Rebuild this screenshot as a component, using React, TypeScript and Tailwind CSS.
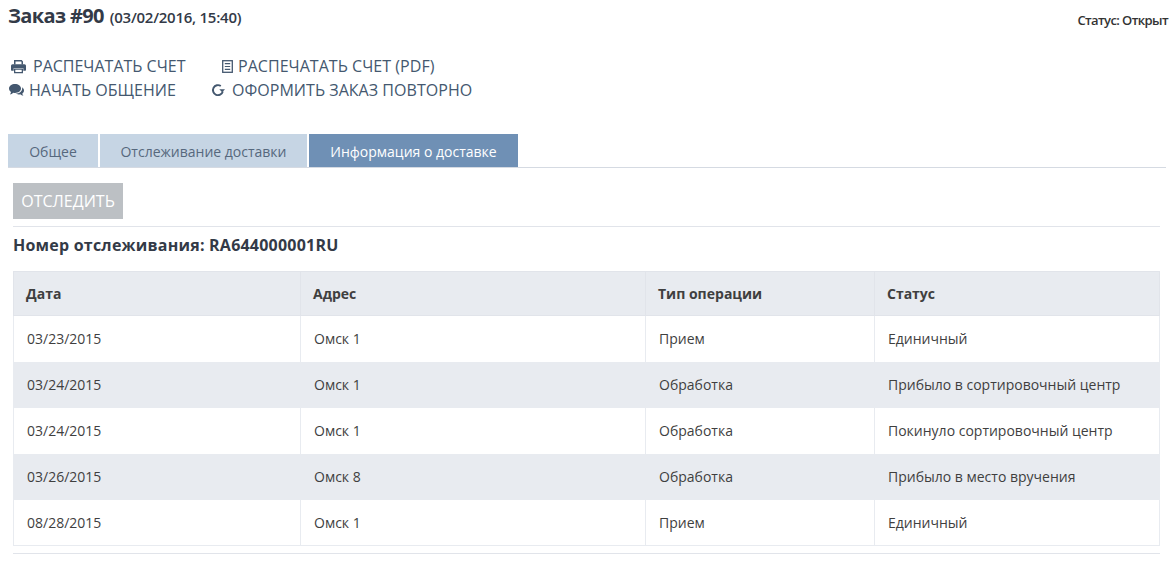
import React from "react";

const rows = [
  ["03/23/2015", "Омск 1", "Прием", "Единичный"],
  ["03/24/2015", "Омск 1", "Обработка", "Прибыло в сортировочный центр"],
  ["03/24/2015", "Омск 1", "Обработка", "Покинуло сортировочный центр"],
  ["03/26/2015", "Омск 8", "Обработка", "Прибыло в место вручения"],
  ["08/28/2015", "Омск 1", "Прием", "Единичный"],
];
const head = ["Дата", "Адрес", "Тип операции", "Статус"];

function PrintIcon() {
  return (
    <svg viewBox="0 0 15 14" className="ml-[2px] mr-[7px] w-[15px] h-[15px]" fill="#44586f">
      <path d="M3 5V.6h7.700L12 2v3h-1.500V2.300L10 1.900H4.500V5z" />
      <path d="M1.500 4.800h12A1.500 1.500 0 0 1 15 6.300V10.500a.7.7 0 0 1-.7.7H12.300V8.400H2.700v2.800H.7A.7.7 0 0 1 0 10.500V6.300A1.500 1.500 0 0 1 1.500 4.800z" />
      <path d="M3 9h9v4.800H3zM4.300 10.300v2.200h6.400v-2.200z" />
    </svg>
  );
}
function FileIcon() {
  return (
    <svg viewBox="0 0 11 13" className="mr-[5px] ml-px w-[11px] h-[13px]" fill="none" stroke="#44586f">
      <rect x="0.7" y="0.7" width="9.6" height="11.6" strokeWidth="1.300" />
      <path d="M2.800 3.600h5.400M2.800 6.500h5.400M2.800 9.400h5.400" strokeWidth="1.100" />
    </svg>
  );
}
function ChatIcon() {
  return (
    <svg viewBox="0 0 15 14" className="mr-[5px] w-[15px] h-[15px]" fill="#44586f">
      <path d="M6 .6c3.300 0 6 1.900 6 4.400s-2.700 4.400-6 4.400c-.6 0-1.100 0-1.700-.2C3.300 10.200 2.200 10.800.9 11c.6-.7 1-1.500 1.100-2.400C.8 7.700 0 6.400 0 5 0 2.500 2.700.6 6 .6z" />
      <path d="M13.100 3.700C14.300 4.500 15 5.600 15 6.900c0 1.200-.7 2.300-1.700 3 .1.8.5 1.600 1.100 2.300-1.200-.2-2.300-.7-3.200-1.500-.5.1-1 .2-1.600.2-1.200 0-2.200-.3-3.100-.8 3.900 0 7.400-2.300 6.600-6.400z" />
    </svg>
  );
}
function RepeatIcon() {
  return (
    <svg viewBox="0 0 14 14" className="mr-[7px] w-[14px] h-[14px]" fill="none" stroke="#44586f">
      <path d="M9.800 3A5 5 0 1 0 11.800 8.500" strokeWidth="1.900" />
      <path d="M8.300 6.300h5.700L11.200 9.300z" fill="#44586f" stroke="none" />
    </svg>
  );
}

export default function App() {
  return (
    <div className="w-[1174px] h-[562px] overflow-hidden bg-white font-['Open_Sans',sans-serif] text-[14px] text-[#333]">
      <div className="flex justify-between pl-2 pr-[6px] h-[54px]">
        <div className="flex items-baseline gap-[6px] h-[32px]">
          <span className="text-[20px] leading-[32px] font-bold tracking-[-0.65px] text-[#333a47]">Заказ #90</span>
          <span className="text-[15px] font-semibold tracking-[-0.25px] text-[#333a47]">(03/02/2016, 15:40)</span>
        </div>
        <div className="pt-[11px] text-[13px] leading-[18px] font-semibold tracking-[-0.6px] text-[#333]">Статус: Открыт</div>
      </div>
      <div className="pl-[9px] text-[16px] leading-[24px] text-[#44586f] h-[80px]">
        <div className="flex h-[24px] items-center">
          <PrintIcon />
          <span className="w-[188px]">РАСПЕЧАТАТЬ СЧЕТ</span>
          <FileIcon />
          <span className="tracking-[0.04px]">РАСПЕЧАТАТЬ СЧЕТ (PDF)</span>
        </div>
        <div className="flex h-[24px] items-center">
          <ChatIcon />
          <span className="w-[182px]">НАЧАТЬ ОБЩЕНИЕ</span>
          <RepeatIcon />
          <span className="tracking-[0.04px]">ОФОРМИТЬ ЗАКАЗ ПОВТОРНО</span>
        </div>
      </div>
      <div className="ml-2 mr-2 flex gap-[2px] border-b border-[#d5dae2] h-[34px] text-[14px]">
        <div className="w-[90px] h-[33px] pt-px bg-[#c6d5e4] text-[#56687d] flex items-center justify-center">Общее</div>
        <div className="w-[207px] h-[33px] pt-px bg-[#c6d5e4] text-[#56687d] flex items-center justify-center">Отслеживание доставки</div>
        <div className="w-[209px] h-[33px] pt-px bg-[#6f90b5] text-white flex items-center justify-center">Информация о доставке</div>
      </div>
      <div className="ml-[13px] mr-[14px]">
        <div className="mt-[15px] w-[110px] h-[36px] bg-[#bcc0c4] text-white text-[16px] flex items-center justify-center">ОТСЛЕДИТЬ</div>
        <div className="mt-[7px] border-t border-[#e1e4ea] h-[45px] pt-[6px] text-[16px] leading-[24px] font-bold tracking-[0.22px] text-[#333a47]">Номер отслеживания: RA644000001RU</div>
        <table className="w-[1147px] table-fixed border-separate border-spacing-0">
          <colgroup>
            <col className="w-[288px]" />
            <col className="w-[345px]" />
            <col className="w-[229px]" />
            <col className="w-[285px]" />
          </colgroup>
          <thead>
            <tr className="h-[45px] bg-[#e8ebf0]">
              {head.map((h, j) => (
                <th key={h} className={`border-y border-r border-[#e1e4ea] text-left font-bold pl-3 text-[14px] text-[#3f3f3f] ${j === 0 ? "border-l" : ""}`}>{h}</th>
              ))}
            </tr>
          </thead>
          <tbody>
            {rows.map((r, i) => (
              <tr key={i} className={i % 2 ? "bg-[#e8ebf0]" : "bg-white"}>
                {r.map((c, j) => (
                  <td key={j} className={`h-[46px] border-r border-[#e8ebf0] pl-[13px] text-[14px] text-[#3f3f3f] ${j === 0 ? "border-l" : ""} ${i === 4 ? "border-b" : "pb-[2px]"}`}>{c}</td>
                ))}
              </tr>
            ))}
          </tbody>
        </table>
        <div className="mt-[7px] border-t border-[#e1e4ea]" />
      </div>
    </div>
  );
}
